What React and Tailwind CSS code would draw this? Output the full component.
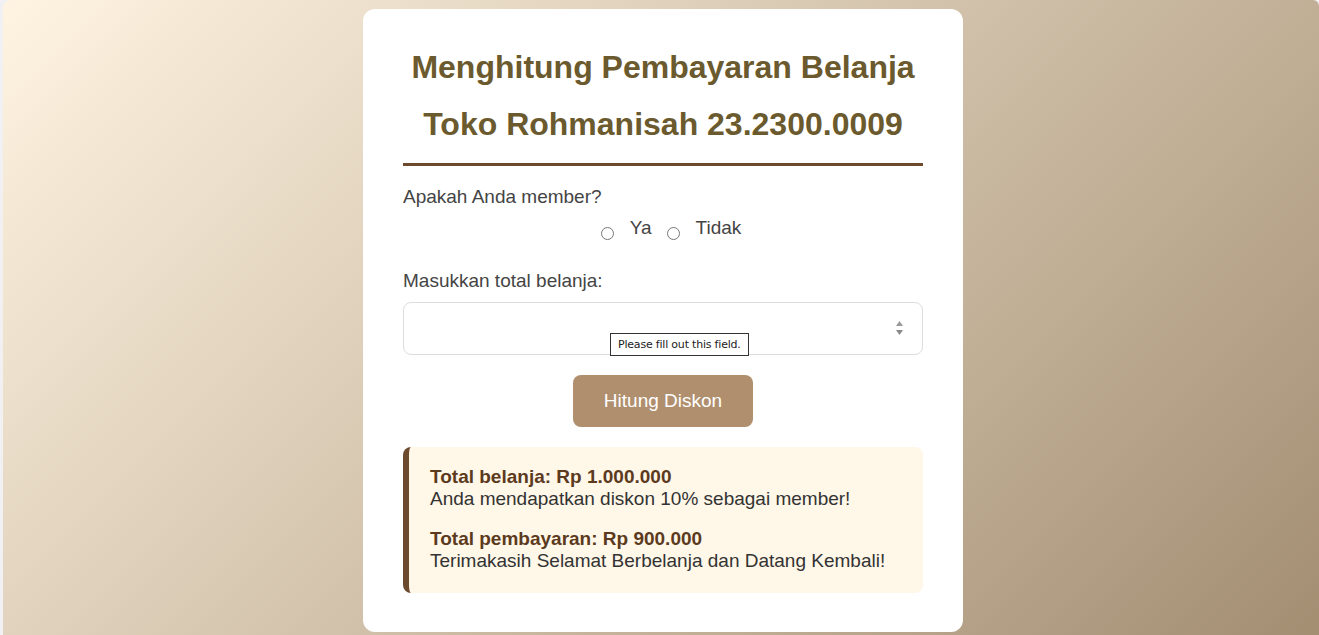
import { useState } from 'react';

const formatRupiah = (n) => 'Rp ' + n.toLocaleString('de-DE');

const App = () => {
  const [member, setMember] = useState('');
  const total = 1000000;
  const bayar = 900000;

  return (
    <div className="h-[635px] overflow-hidden bg-[#f1f1f4] pl-[3px] font-['Liberation_Sans',Arial,sans-serif]">
      <div className="h-full rounded-tl-lg rounded-tr-md bg-[linear-gradient(135deg,#fff4e2,#a38e72)] pt-[9px]">
        <div className="w-[600px] rounded-xl bg-white px-10 pt-[30px] pb-[39px] ml-[360px]">
          {/* Header */}
          <h2 className="text-center text-[32px] font-bold leading-[57px] text-[#6b5a2e]">
            Menghitung Pembayaran Belanja
            <br />
            Toko Rohmanisah 23.2300.0009
          </h2>
          <div className="mt-[10px] h-[3px] bg-[#6b4a2e]" />

          {/* Member */}
          <p className="mt-[20px] text-[19px] leading-[22px] text-[#444]">Apakah Anda member?</p>
          <div className="mt-[9px] flex items-start justify-center pl-[16px] text-[19px] leading-[22px] text-[#444]">
            <input
              type="radio"
              name="member"
              checked={member === 'ya'}
              onChange={() => setMember('ya')}
              className="mt-[10px] mr-4 h-[13px] w-[13px]"
            />
            <span className="mr-[15px]">Ya</span>
            <input
              type="radio"
              name="member"
              checked={member === 'tidak'}
              onChange={() => setMember('tidak')}
              className="mt-[10px] mr-4 h-[13px] w-[13px]"
            />
            <span>Tidak</span>
          </div>

          {/* Total belanja */}
          <p className="mt-[30px] text-[19px] leading-[22px] text-[#444]">Masukkan total belanja:</p>
          <div className="relative mt-[10px]">
            <input
              type="text"
              className="h-[53px] w-full rounded-lg border border-[#ddd] px-3 text-[16px] outline-none"
            />
            <svg className="absolute left-[493px] top-[18px]" width="7" height="16" viewBox="0 0 7 16">
              <path d="M3.5 1 L7 6 L0 6 Z" fill="#9a9a9a" />
              <path d="M0 10 L7 10 L3.5 15 Z" fill="#8a8a8a" />
            </svg>
            <div className="absolute left-[207px] top-[31px] border border-[#333] bg-white px-[7px] py-[4px] text-[11px] leading-[13px] text-[#222] font-['DejaVu_Sans',sans-serif] tracking-[-0.2px]">
              Please fill out this field.
            </div>
          </div>

          {/* Action */}
          <div className="mt-[20px] flex justify-center">
            <button className="h-[52px] w-[180px] rounded-lg bg-[#b08f6f] text-[19px] text-white">
              Hitung Diskon
            </button>
          </div>

          {/* Hasil */}
          <div className="mt-[20px] rounded-lg border-l-[6px] border-[#6b4a2e] bg-[#fff7e8] pt-[19px] pb-[21px] pl-[21px] text-[19px] leading-[22px] text-[#333]">
            <p className="font-bold text-[#5c3a1e]">Total belanja: {formatRupiah(total)}</p>
            <p>Anda mendapatkan diskon 10% sebagai member!</p>
            <p className="mt-[18px] font-bold text-[#5c3a1e]">Total pembayaran: {formatRupiah(bayar)}</p>
            <p>Terimakasih Selamat Berbelanja dan Datang Kembali!</p>
          </div>
        </div>
      </div>
    </div>
  );
};

export default App;
